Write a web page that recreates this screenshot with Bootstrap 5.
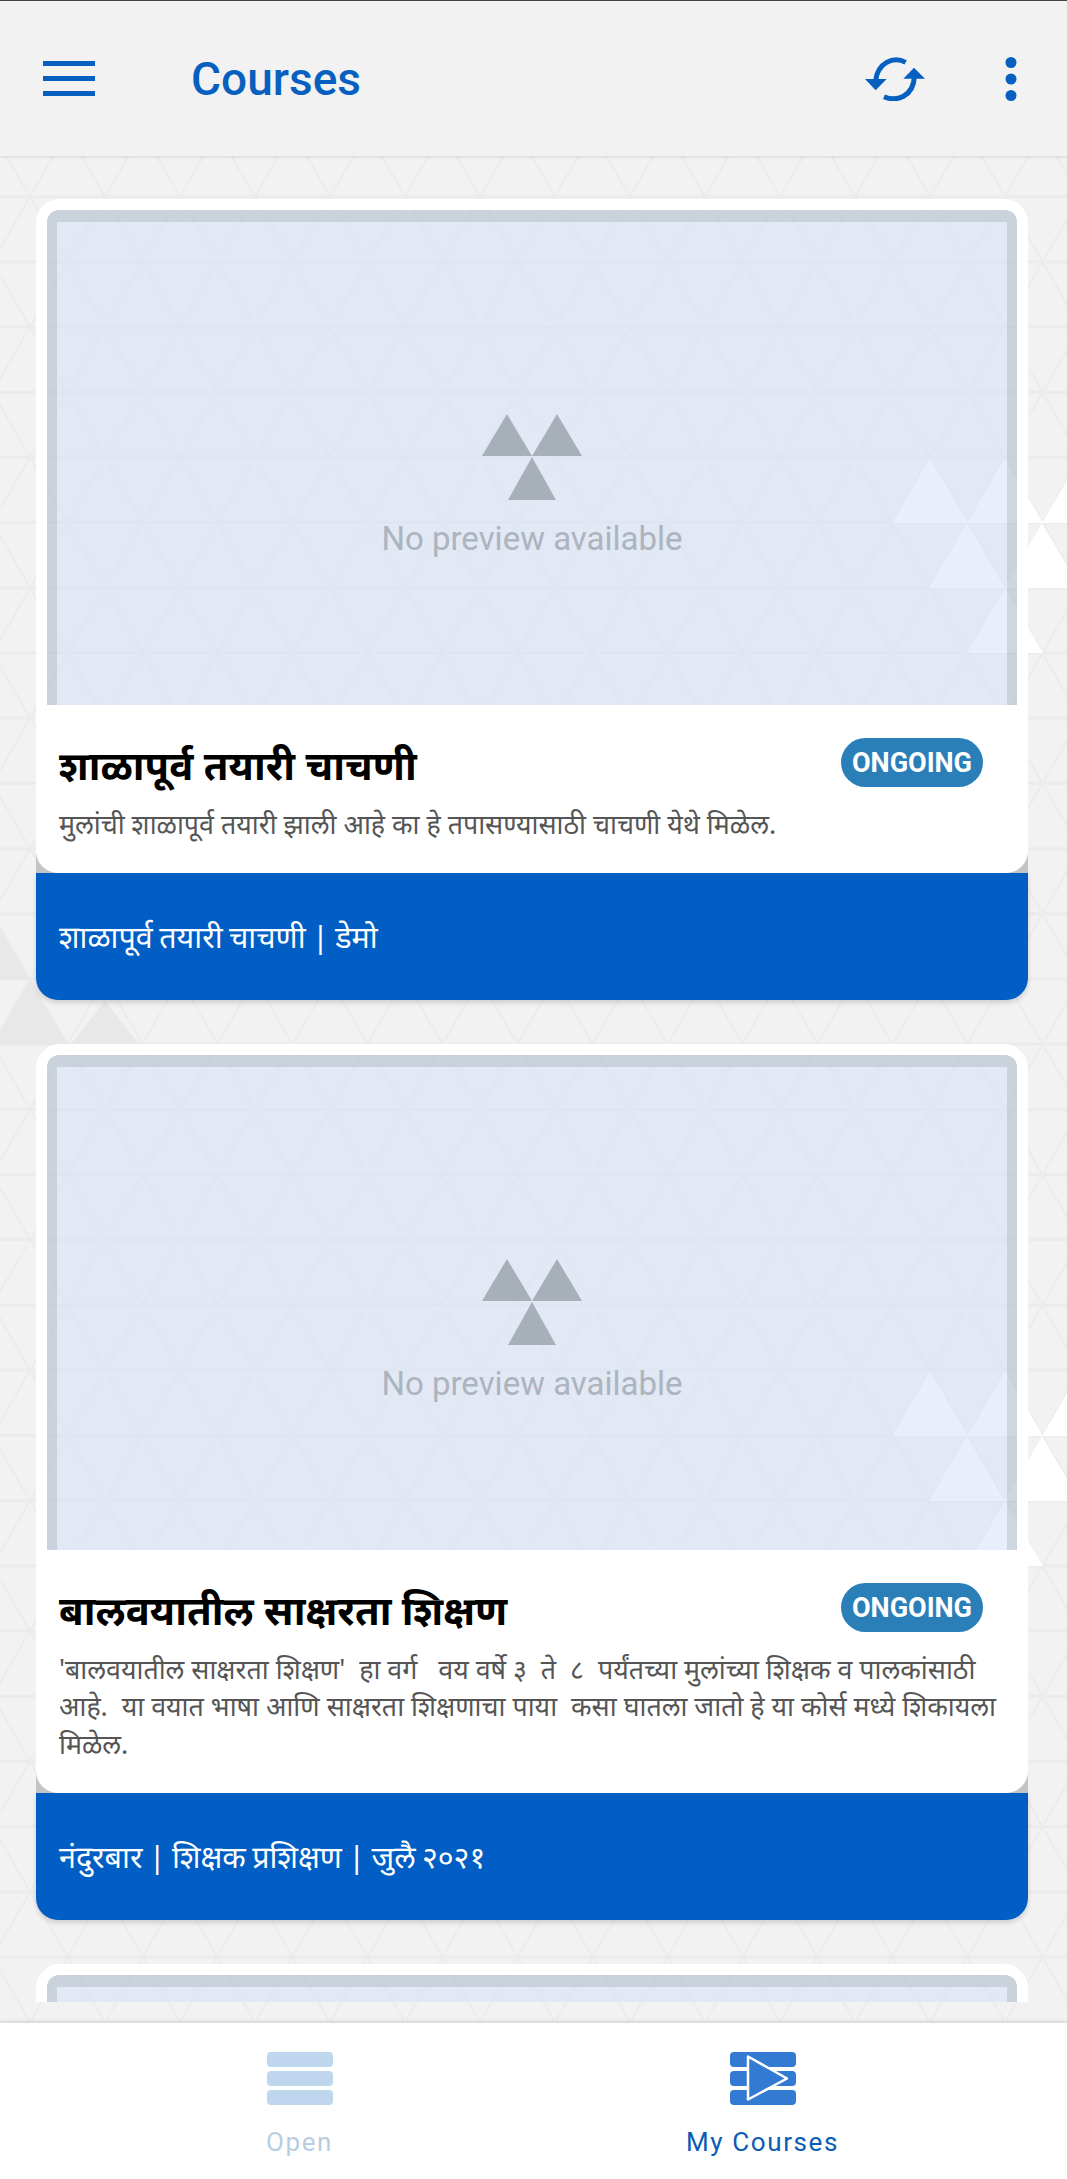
<!DOCTYPE html>
<html lang="mr">
<head>
<meta charset="utf-8">
<title>Courses</title>
<link href="https://cdn.jsdelivr.net/npm/bootstrap@5.3.0/dist/css/bootstrap.min.css" rel="stylesheet">
<style>
html,body{height:100%;margin:0}
body{background:#f2f2f2;font-family:"Noto Sans","Liberation Sans",sans-serif;overflow:hidden}
.app-shell{height:2179px}
.top-bar{height:156px;background:#f2f2f3;border-top:1px solid #444;padding:0 50px 0 43px;box-shadow:0 1px 3px rgba(0,0,0,.12);position:relative;z-index:3;flex:none}
.top-title{font:500 46px/1 Roboto,sans-serif;color:#0760bf;margin-left:96px}
.top-actions{gap:80px}
.content-area{height:1867px;flex:none;overflow:hidden}
.bg-art{left:0;top:0;width:1067px;height:1867px}
.scroller{height:1846px;overflow:hidden;padding:43px 39px 0 36px;position:relative}
.course-card{--bs-card-bg:transparent;--bs-card-border-width:0;margin-bottom:44px;border-radius:24px 24px 20px 20px}
.shot{border:11px solid #fff;border-bottom:0;border-radius:24px 24px 0 0;height:506px}
.shot-frame{height:100%;border:solid rgba(180,192,208,.65);border-width:12px 10px 0;background:rgba(213,224,246,.55);background-clip:padding-box;border-radius:12px 12px 0 0;text-align:center;padding-top:192px}
.shot-frame svg{display:block;margin:0 auto}
.shot-text{font:400 33px/1.2 Roboto,sans-serif;color:#acb4bf;margin-top:19px}
.info{background:#fff;border-radius:0 0 22px 22px;padding:33px 20px 31px 23px;position:relative;z-index:1}
.info-head{height:49px;margin-bottom:17.5px}
.info-title{font-size:40px;font-weight:700;line-height:49px;color:#000;margin:2px 0 0}
.state-pill{background:#2a7fb8;color:#fff;font:700 27px/51px Roboto,sans-serif;height:49px;width:142px;padding:0;border-radius:25px;margin-right:25px;text-align:center}
.info-text{font-size:26.8px;line-height:37.5px;color:#555;margin:0;white-space:pre-wrap}
.foot{--bs-card-cap-bg:#005ec4;--bs-card-cap-color:#fff;--bs-card-cap-padding-y:0;--bs-card-cap-padding-x:23px;--bs-card-border-width:0;background:#005ec4;color:#fff;height:127px;line-height:127px;font-size:30.5px;word-spacing:-1.5px;position:relative;border-radius:0 0 22px 22px!important;box-shadow:0 3px 5px rgba(0,0,0,.14)}
.foot::before{content:"";position:absolute;left:0;right:0;top:-26px;height:26px;background:#c2c4c6}
.bottom-nav{height:156px;background:#fff;box-shadow:0 -2px 3px rgba(0,0,0,.08);padding:29px 72px 0 68px;position:relative;z-index:3;flex:none}
.tab-btn{width:463px;text-align:center}
.tab-btn svg{display:block;margin:0 auto}
.tab-label{font:400 26px/1 Roboto,sans-serif;letter-spacing:1.6px;margin-top:24px}
.tab-off{color:#b7cde1}
.tab-on{color:#0c5cb4}
</style>
</head>
<body>
<div class="app-shell d-flex flex-column">
  <header class="top-bar d-flex align-items-center">
    <svg width="52" height="35" viewBox="0 0 52 35" fill="#0760bf" aria-label="menu"><rect width="52" height="5"/><rect y="15" width="52" height="5"/><rect y="30" width="52" height="5"/></svg>
    <div class="top-title">Courses</div>
    <div class="top-actions d-flex align-items-center ms-auto">
      <svg width="60" height="44" viewBox="75 78 180 132" fill="none" aria-label="refresh">
        <path d="M197 94C160 74 112 96 107 150" stroke="#0760bf" stroke-width="15"/>
        <path d="M132 197C170 214 220 196 223 138" stroke="#0760bf" stroke-width="15"/>
        <path d="M75 144H140L107 178ZM190 143H255L222 110Z" fill="#0760bf"/>
      </svg>
      <svg width="12" height="44" viewBox="0 0 12 44" fill="#0760bf" aria-label="more"><circle cx="6" cy="5.5" r="5.5"/><circle cx="6" cy="22" r="5.5"/><circle cx="6" cy="38.5" r="5.5"/></svg>
    </div>
  </header>

  <main class="content-area position-relative">
    <svg class="bg-art position-absolute" viewBox="0 0 1067 1867" aria-hidden="true">
      <defs>
        <pattern id="tri" width="75" height="130.4" patternUnits="userSpaceOnUse" patternTransform="translate(30 40.6)">
          <path d="M0 0L37.5 65.2L75 0M0 130.4L37.5 65.2L75 130.4" fill="none" stroke="#ebebeb" stroke-width="1.800"/>
          <path d="M0 0H75M0 65.2H75M0 130.4H75" fill="none" stroke="#ebebeb" stroke-width="3"/>
        </pattern>
      </defs>
      <rect width="1067" height="1867" fill="url(#tri)"/>
      <g fill="#fff">
        <path d="M930 302L968 367H892ZM1005 302L1043 367H967ZM1080 302L1118 367H1042ZM967 367L1005 432H929ZM1042 367L1080 432H1004ZM1005 432L1043 497H967Z"/>
        <path d="M930 1215L968 1280H892ZM1005 1215L1043 1280H967ZM1080 1215L1118 1280H1042ZM967 1280L1005 1345H929ZM1042 1280L1080 1345H1004ZM1005 1345L1043 1410H967Z"/>
      </g>
      <g fill="#e8e8e8">
        <path d="M-8 759L30 824H-46ZM30 824L68 889H-8ZM105 845L140 889H70Z"/>
      </g>
    </svg>
    <div class="scroller">
      <article class="card course-card">
        <div class="shot"><div class="shot-frame">
          <svg width="100" height="86" viewBox="0 0 100 86" fill="#a7afb9"><path d="M25 0L50 42H0ZM75 0L100 42H50ZM50 43L74 86H26Z"/></svg>
          <div class="shot-text">No preview available</div>
        </div></div>
        <div class="info">
          <div class="info-head d-flex justify-content-between">
            <h2 class="info-title">शाळापूर्व तयारी चाचणी</h2>
            <span class="badge state-pill">ONGOING</span>
          </div>
          <p class="info-text">मुलांची शाळापूर्व तयारी झाली आहे का हे तपासण्यासाठी चाचणी येथे मिळेल.</p>
        </div>
        <div class="card-footer foot">शाळापूर्व तयारी चाचणी | डेमो</div>
      </article>

      <article class="card course-card">
        <div class="shot"><div class="shot-frame">
          <svg width="100" height="86" viewBox="0 0 100 86" fill="#a7afb9"><path d="M25 0L50 42H0ZM75 0L100 42H50ZM50 43L74 86H26Z"/></svg>
          <div class="shot-text">No preview available</div>
        </div></div>
        <div class="info">
          <div class="info-head d-flex justify-content-between">
            <h2 class="info-title">बालवयातील साक्षरता शिक्षण</h2>
            <span class="badge state-pill">ONGOING</span>
          </div>
          <p class="info-text">'बालवयातील साक्षरता शिक्षण'  हा वर्ग   वय वर्षे ३  ते  ८  पर्यंतच्या मुलांच्या शिक्षक व पालकांसाठी आहे.  या वयात भाषा आणि साक्षरता शिक्षणाचा पाया  कसा घातला जातो हे या कोर्स मध्ये शिकायला मिळेल.</p>
        </div>
        <div class="card-footer foot">नंदुरबार | शिक्षक प्रशिक्षण | जुलै २०२१</div>
      </article>

      <article class="card course-card">
        <div class="shot"><div class="shot-frame"></div></div>
      </article>
    </div>
  </main>

  <nav class="bottom-nav d-flex">
    <div class="tab-btn">
      <svg width="66" height="53" viewBox="0 0 66 53" fill="#bed6ee"><rect width="66" height="15" rx="4"/><rect y="19" width="66" height="15" rx="4"/><rect y="38" width="66" height="15" rx="4"/></svg>
      <div class="tab-label tab-off">Open</div>
    </div>
    <div class="tab-btn">
      <svg width="66" height="53" viewBox="0 0 66 53"><g fill="#337ad2"><rect width="66" height="15" rx="4"/><rect y="19" width="66" height="15" rx="4"/><rect y="38" width="66" height="15" rx="4"/></g><path d="M18 4.500L57 26.500L18 47.500Z" fill="#337ad2" stroke="#fff" stroke-width="2.500" stroke-linejoin="round"/></svg>
      <div class="tab-label tab-on">My Courses</div>
    </div>
  </nav>
</div>
<script src="https://cdn.jsdelivr.net/npm/bootstrap@5.3.0/dist/js/bootstrap.bundle.min.js"></script>
</body>
</html>
